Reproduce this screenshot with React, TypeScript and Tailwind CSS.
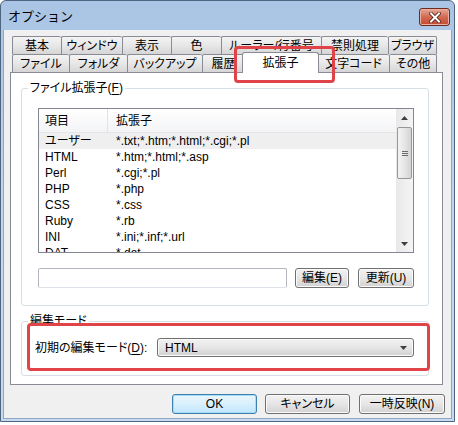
import React from 'react';

type Tab = { label: string; w: string; active?: boolean };

const row1: Tab[] = [
  { label: '基本', w: 'w-[49px]' },
  { label: 'ウィンドウ', w: 'w-[61px]' },
  { label: '表示', w: 'w-[49px]' },
  { label: '色', w: 'w-[50px]' },
  { label: 'ルーラー/行番号', w: 'w-[100px]' },
  { label: '禁則処理', w: 'w-[67px]' },
  { label: 'ブラウザ', w: 'w-[49px]' },
];

const row2: Tab[] = [
  { label: 'ファイル', w: 'w-[57px]' },
  { label: 'フォルダ', w: 'w-[58px]' },
  { label: 'バックアップ', w: 'w-[75px]' },
  { label: '履歴', w: 'w-[42px]' },
  { label: '拡張子', w: 'w-[77px]', active: true },
  { label: '文字コード', w: 'w-[72px]' },
  { label: 'その他', w: 'w-[48px]' },
];

const exts: [string, string][] = [
  ['ユーザー', '*.txt;*.htm;*.html;*.cgi;*.pl'],
  ['HTML', '*.htm;*.html;*.asp'],
  ['Perl', '*.cgi;*.pl'],
  ['PHP', '*.php'],
  ['CSS', '*.css'],
  ['Ruby', '*.rb'],
  ['INI', '*.ini;*.inf;*.url'],
  ['DAT', '*.dat'],
];

function TabRow({ tabs }: { tabs: Tab[] }) {
  return (
    <div className="flex h-[18px] items-start">
      {tabs.map((t, i) =>
        t.active ? (
          <div
            key={t.label}
            className={`relative z-10 -mx-[2px] -mt-[2px] flex h-[21px] items-center justify-center whitespace-nowrap rounded-t-[3px] border border-b-0 border-[#898c95] bg-white pb-[1px] ${t.w}`}
          >
            {t.label}
          </div>
        ) : (
          <div
            key={t.label}
            className={`flex h-[18px] items-center justify-center whitespace-nowrap rounded-t-[2px] border-t border-l border-[#898c95] bg-gradient-to-b from-[#f4f4f4] via-[#e7e7e7] to-[#d6d6d6] ${t.w} ${i === tabs.length - 1 ? 'border-r' : ''}`}
          >
            {t.label}
          </div>
        ),
      )}
    </div>
  );
}

function Arrow({ down }: { down?: boolean }) {
  return (
    <svg width="7" height="4" viewBox="0 0 7 4" className={down ? '' : 'rotate-180'}>
      <path d="M0 0h7L3.5 4z" fill="#3f3f3f" />
    </svg>
  );
}

function WinButton({ label, w, primary }: { label: React.ReactNode; w: string; primary?: boolean }) {
  return (
    <div
      className={`flex h-[20px] items-center justify-center whitespace-nowrap rounded-[3px] border ${w} ${
        primary
          ? 'border-[#3c7fb1] bg-gradient-to-b from-[#eaf6fd] via-[#d9f0fc] to-[#bee6fd] shadow-[inset_0_0_0_1px_#a9dcf6]'
          : 'border-[#707070] bg-gradient-to-b from-[#f2f2f2] via-[#e6e6e6] to-[#d2d2d2] shadow-[inset_0_0_0_1px_#fbfbfb]'
      }`}
    >
      {label}
    </div>
  );
}

export default function App() {
  return (
    <div className="relative h-[425px] w-[458px] bg-white font-['Liberation_Sans','Noto_Sans_CJK_JP',sans-serif] text-[12px] leading-[14px] text-black [font-feature-settings:'palt']">
      <div className="flex h-[422px] w-[455px] flex-col rounded-t-[6px] border border-[#4e6580] bg-gradient-to-b from-[#a9c4e4] via-[#c2d7ee] to-[#c7daef]">
        {/* title bar */}
        <div className="flex h-[29px] items-start justify-between pl-[7px] pr-[4px]">
          <span className="mt-[7px] font-['Noto_Sans_CJK_JP',sans-serif] text-[13px] leading-[16px] [font-feature-settings:normal]">
            オプション
          </span>
          <div className="mt-[7px] flex h-[18px] w-[31px] items-center justify-center rounded-[3px] border border-[#6d2b1f] bg-gradient-to-b from-[#e7a897] via-[#d26a50] to-[#c24a2f] shadow-[inset_0_0_0_1px_#eab2a4]">
            <svg width="12" height="11" viewBox="0 0 12 11">
              <path d="M2 1.5l8 8M10 1.5l-8 8" stroke="#4a1a12" strokeWidth="3.6" strokeLinecap="square" />
              <path d="M2 1.5l8 8M10 1.5l-8 8" stroke="#ffffff" strokeWidth="2" strokeLinecap="square" />
            </svg>
          </div>
        </div>

        {/* client area */}
        <div className="mx-[2px] mb-[2px] flex flex-1 flex-col border-x border-b border-[#8fa6c0] bg-[#f0f0f0] pl-[6px] pt-[6px]">
          <div className="ml-[2px]">
            <TabRow tabs={row1} />
            <TabRow tabs={row2} />
          </div>

          <div className="flex h-[313px] w-[433px] flex-col border border-[#898c95] bg-white pl-[10px]">
            {/* file extensions group */}
            <fieldset className="mt-[8px] w-[408px] rounded-[3px] border border-[#d5dfe5]">
              <legend className="ml-[6px] px-[2px] leading-[14px]">
                ファイル拡張子(<span className="underline underline-offset-2">F</span>)
              </legend>
              <div className="pb-[17px] pl-[16px] pt-[13px]">
                <div className="flex h-[145px] w-[376px] border border-[#828790]">
                  <div className="flex-1 overflow-hidden">
                    <div className="flex h-[24px] items-center border-b border-[#e5e5e5] bg-gradient-to-b from-white to-[#f3f4f6]">
                      <div className="flex h-full w-[69px] items-center border-r border-[#e3e3e3] pl-[6px]">項目</div>
                      <div className="pl-[8px]">拡張子</div>
                    </div>
                    {exts.map(([name, ext], i) => (
                      <div key={name} className={`flex h-[16px] items-center ${i === 0 ? 'bg-[#efefef]' : ''}`}>
                        <div className="w-[69px] pl-[6px]">{name}</div>
                        <div className="whitespace-nowrap pl-[8px]">{ext}</div>
                      </div>
                    ))}
                  </div>
                  <div className="flex w-[17px] flex-col bg-gradient-to-r from-[#e8e8e8] to-[#f5f5f5]">
                    <div className="flex h-[17px] items-center justify-center">
                      <Arrow />
                    </div>
                    <div className="flex-1 px-[1px] pt-[1px]">
                      <div className="flex h-[52px] flex-col items-center justify-center gap-[1px] rounded-[2px] border border-[#979797] bg-gradient-to-r from-[#f3f3f3] via-[#e6e6e6] to-[#d3d3d3]">
                        <div className="h-px w-[6px] bg-[#6b6b6b]" />
                        <div className="h-px w-[6px] bg-[#6b6b6b]" />
                        <div className="h-px w-[6px] bg-[#6b6b6b]" />
                      </div>
                    </div>
                    <div className="flex h-[17px] items-center justify-center">
                      <Arrow down />
                    </div>
                  </div>
                </div>

                <div className="mt-[15px] flex items-center">
                  <div className="h-[20px] w-[249px] rounded-[2px] border border-[#b3b6bc] border-b-[#dde2e8] bg-white" />
                  <div className="ml-[8px]">
                    <WinButton label="編集(E)" w="w-[54px]" />
                  </div>
                  <div className="ml-[9px]">
                    <WinButton label="更新(U)" w="w-[56px]" />
                  </div>
                </div>
              </div>
            </fieldset>

            {/* edit mode group */}
            <fieldset className="mt-[8px] w-[408px] rounded-[3px] border border-[#d5dfe5]">
              <legend className="ml-[6px] px-[2px] leading-[14px]">編集モード</legend>
              <div className="flex items-center pb-[18px] pl-[13px] pr-[14px] pt-[10px]">
                <span>
                  初期の編集モード(<span className="underline underline-offset-2">D</span>):
                </span>
                <div className="ml-auto flex h-[19px] w-[257px] items-center justify-between rounded-[3px] border border-[#707070] bg-gradient-to-b from-[#f2f2f2] via-[#e6e6e6] to-[#d0d0d0] pl-[7px] pr-[6px] shadow-[inset_0_0_0_1px_#fbfbfb]">
                  <span>HTML</span>
                  <Arrow down />
                </div>
              </div>
            </fieldset>
          </div>

          <div className="mt-[9px] flex justify-end gap-[8px] pr-[6px]">
            <WinButton label="OK" w="w-[85px]" primary />
            <WinButton label="キャンセル" w="w-[85px]" />
            <div className="ml-[1px]">
              <WinButton label="一時反映(N)" w="w-[86px]" />
            </div>
          </div>
        </div>
      </div>

      {/* red annotation boxes */}
      <div className="absolute left-[234px] top-[46px] h-[37px] w-[101px] rounded-[4px] border-[3px] border-[#e04448]" />
      <div className="absolute left-[27px] top-[323px] h-[48px] w-[403px] rounded-[4px] border-[3px] border-[#e04448]" />
    </div>
  );
}
